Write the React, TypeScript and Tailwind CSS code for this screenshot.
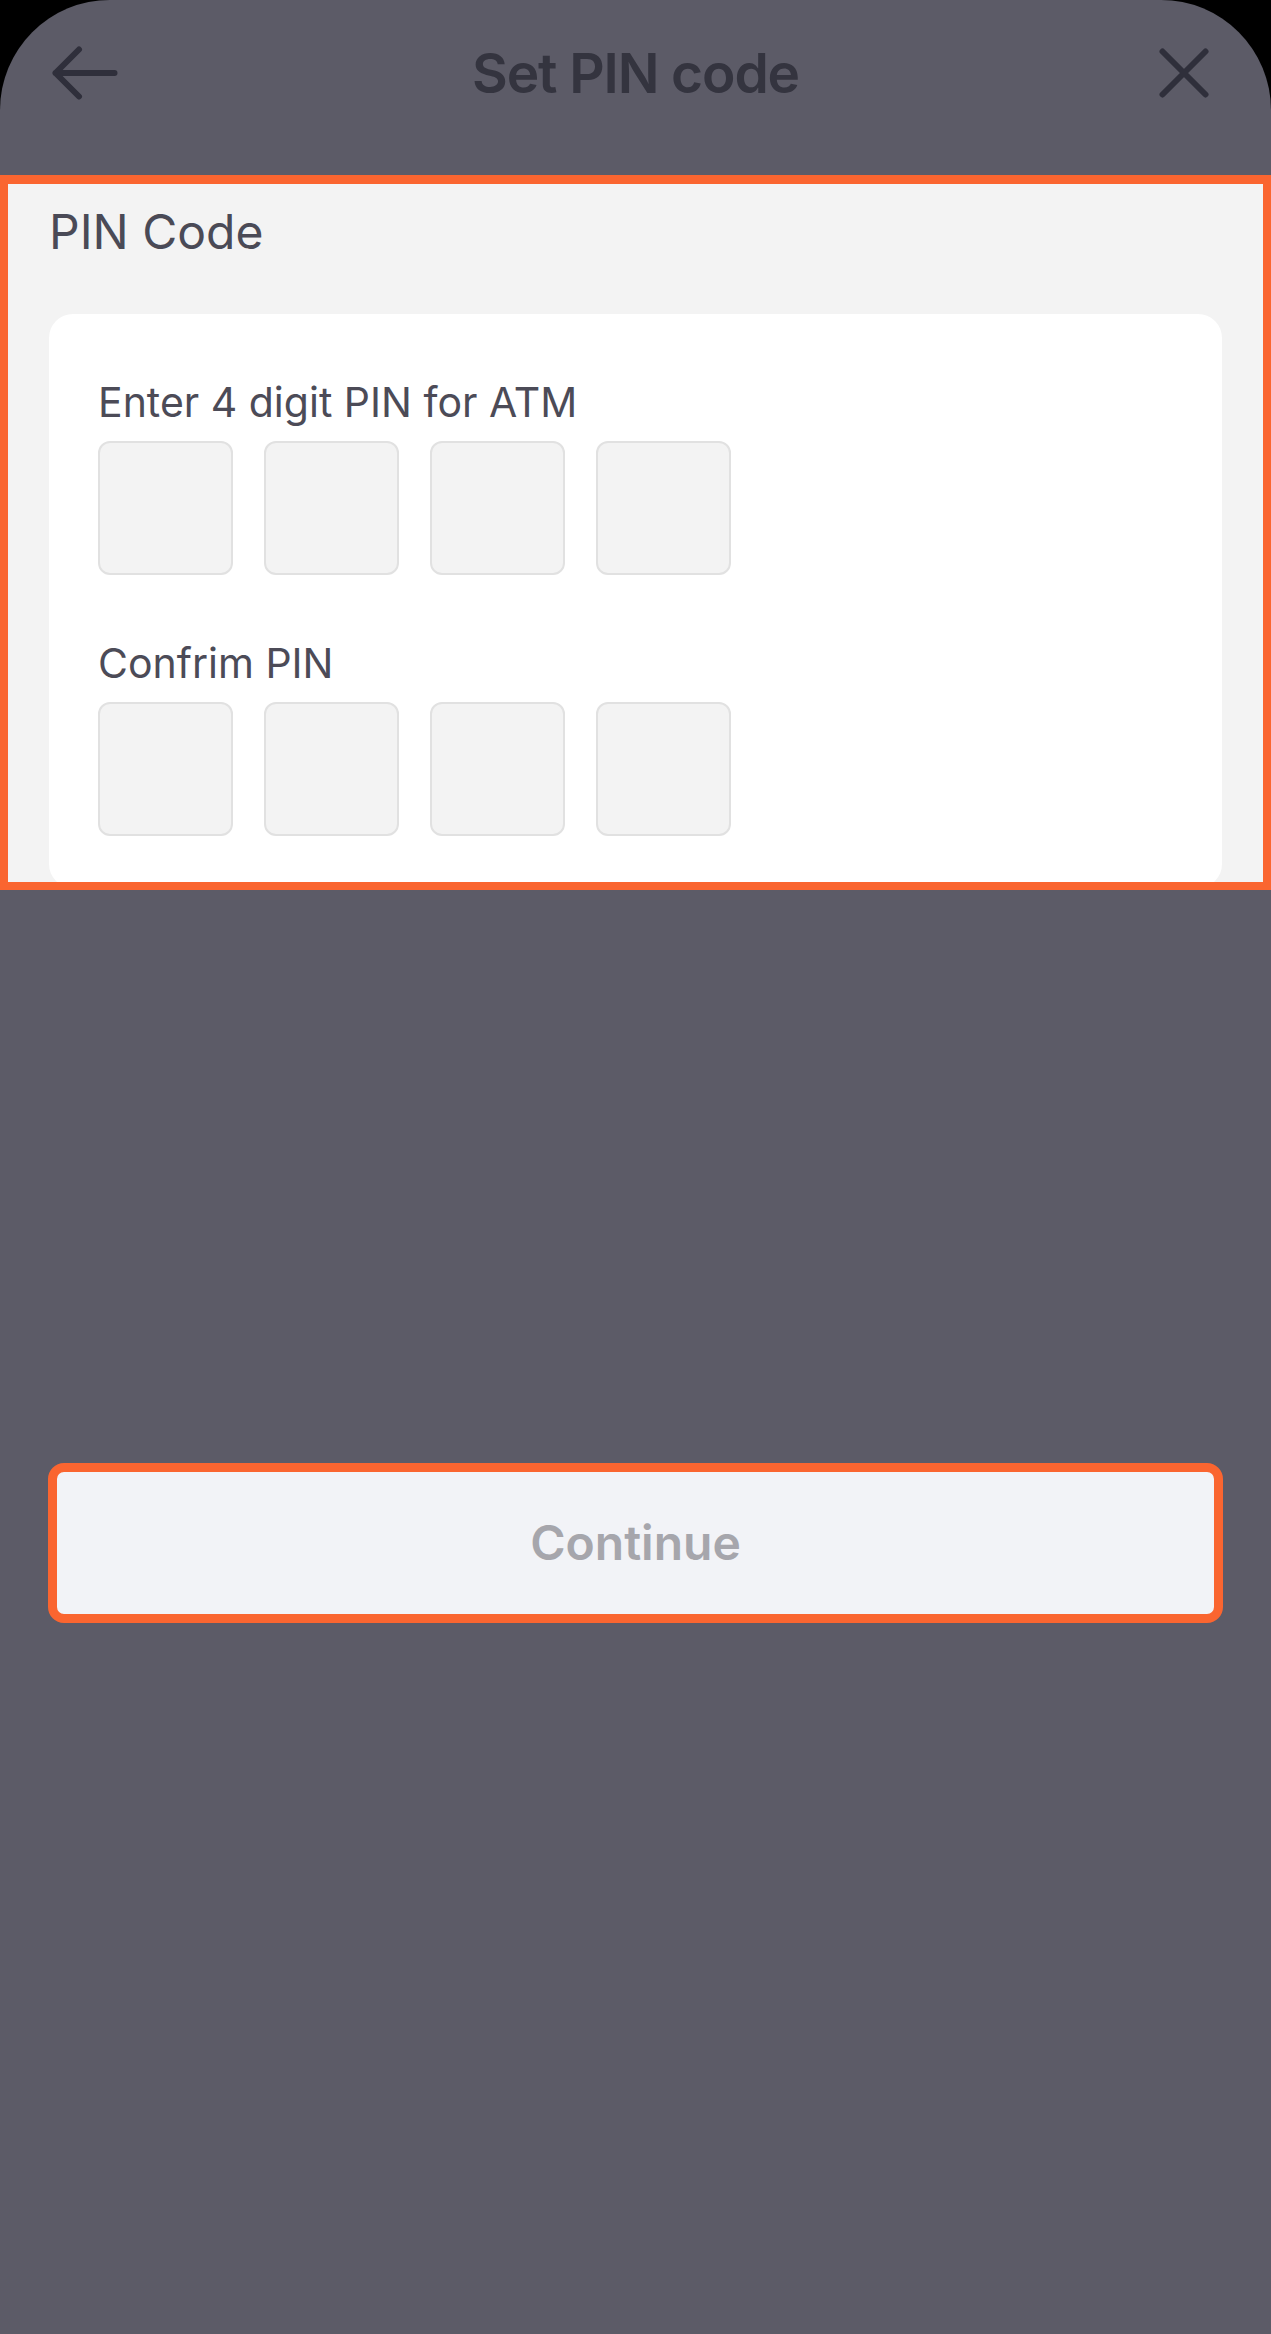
import React from 'react';

const pinSlots = [0, 1, 2, 3];

function PinRow() {
  return (
    <div className="mt-[14px] flex gap-[31px]">
      {pinSlots.map((i) => (
        <div
          key={i}
          className="h-[134px] w-[135px] rounded-[12px] border-2 border-[#e1e1e1] bg-[#f3f3f3]"
        />
      ))}
    </div>
  );
}

export default function App() {
  return (
    <div className="h-[2334px] w-full bg-black font-['Inter','Noto_Sans',sans-serif]">
      <div className="flex h-full flex-col rounded-t-[110px] bg-[#5c5b67]">
        {/* header */}
        <div className="h-[175px]">
          <div className="grid h-[146px] grid-cols-[1fr_auto_1fr] items-center">
            <div className="pl-[52px]">
              <svg width="66" height="54" viewBox="0 0 66 54" fill="none">
                <path
                  d="M3.5 27H62.5M27 3.5L3.5 27L27 50.5"
                  stroke="#2f2f3b"
                  strokeWidth="6"
                  strokeLinecap="round"
                  strokeLinejoin="round"
                />
              </svg>
            </div>
            <h1 className="text-[55px] leading-[66px] font-semibold tracking-[-0.02em] text-[#34343f]">
              Set PIN code
            </h1>
            <div className="flex justify-end pr-[62px]">
              <svg width="50" height="50" viewBox="0 0 50 50" fill="none">
                <path
                  d="M3.5 3.5L46.5 46.5M46.5 3.5L3.5 46.5"
                  stroke="#2f2f3b"
                  strokeWidth="6"
                  strokeLinecap="round"
                />
              </svg>
            </div>
          </div>
        </div>

        {/* pin section */}
        <div className="h-[715px] overflow-hidden border-[8px] border-t-[9px] border-[#fa6530] bg-[#f3f3f3] px-[41px] pt-[19px]">
          <h2 className="text-[48px] leading-[58px] text-[#4a4a56]">PIN Code</h2>
          <div className="mt-[53px] rounded-[24px] bg-white px-[49px] pt-[63px] pb-[52px]">
            <p className="text-[41px] leading-[50px] text-[#4c4b57]">Enter 4 digit PIN for ATM</p>
            <PinRow />
            <p className="mt-[63px] text-[41px] leading-[50px] text-[#4c4b57]">Confrim PIN</p>
            <PinRow />
          </div>
        </div>

        {/* continue */}
        <div className="px-[48px] pt-[573px]">
          <button className="flex h-[160px] w-full items-center justify-center rounded-[16px] border-[9px] border-[#fa6530] bg-[#f2f3f7]">
            <span className="text-[48px] leading-[58px] font-semibold text-[#a6a6ac]">Continue</span>
          </button>
        </div>
      </div>
    </div>
  );
}
